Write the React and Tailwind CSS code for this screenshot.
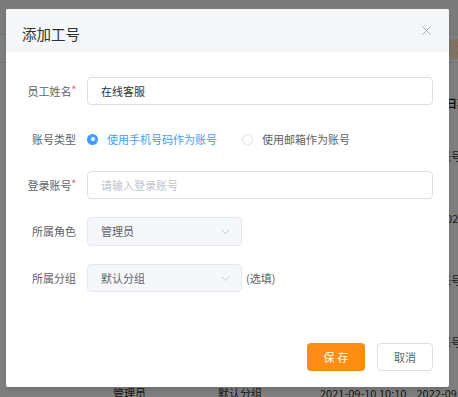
import React from 'react';

const font = { fontFamily: '"Noto Sans CJK SC", "Noto Sans", sans-serif' };

const rows = [
    { phone: '13800138003', acc: '账号', end: '' },
    { phone: '13800138006', acc: '', end: '2022-09' },
    { phone: '13800138003', acc: '账号', end: '' },
    { phone: '13800138004', acc: '账号', end: '' },
];

const FieldLabel = ({ children, required }) => (
    <div className="w-[70px] shrink-0 text-right text-[11px] text-[#606266] leading-none">
        {children}
        {required && <span className="text-[#f56c6c] text-[9px] font-bold align-top relative top-[-1px]">*</span>}
    </div>
);

const Chevron = () => (
    <svg width="9" height="5" viewBox="0 0 9 5" fill="none" className="shrink-0">
        <path d="M0.5 0.5L4.5 4.5L8.5 0.5" stroke="#c0c4cc" strokeWidth="0.9" />
    </svg>
);

const SelectBox = ({ value }) => (
    <div className="w-[155px] h-full flex items-center justify-between pl-[13px] pr-[11px] bg-[#f5f7fa] border border-[#e4e7ed] rounded-[4px] text-[11px] text-[#606266]">
        <span>{value}</span>
        <Chevron />
    </div>
);

const BackgroundPage = () => (
    <div className="w-[458px] h-[397px] bg-white overflow-hidden text-[11px]">
        <div className="h-[35px] bg-[#f7f7f7] border-b border-[#e6e6e6]" />
        <div className="h-[28px] flex items-center border-b border-[#e6e6e6]">
            <div className="ml-[449px] h-[20px] px-2 flex items-center bg-[#ffe7cc] text-[#ff8c1a] whitespace-nowrap rounded-sm">
                添加工号
            </div>
        </div>
        <div className="h-[62px] flex items-end pb-[14px]">
            <span className="ml-[446px] text-[#1f1f1f] font-semibold whitespace-nowrap">日期</span>
        </div>
        {rows.map((r, i) => (
            <div key={i} className="h-[62px] flex items-center text-[#2e2e2e]">
                <div className="w-[6px] overflow-hidden flex justify-end">
                    <div className="shrink-0 whitespace-nowrap leading-[17px] text-right">
                        <div>1</div>
                        <div>{r.phone}</div>
                    </div>
                </div>
                <div className="ml-[440px] whitespace-nowrap text-[#3a3a3a]">{r.acc || r.end}</div>
            </div>
        ))}
        <div className="flex text-[#2e2e2e] whitespace-nowrap mt-[12px]">
            <span className="ml-[113px]">管理员</span>
            <span className="ml-[72px]">默认分组</span>
            <span className="ml-[58px]">2021-09-10 10:10</span>
            <span className="ml-[10px]">2022-09</span>
        </div>
    </div>
);

const Modal = () => (
    <div className="absolute left-[6px] top-[9px] w-[443px] bg-white rounded-[2px] shadow-md">
        {/* Header */}
        <div className="h-[43px] bg-[#f5f6f7] flex items-center justify-between pl-4 pr-[16px] rounded-t-[2px]">
            <span className="text-[14.5px] text-[#303133] mt-[7px]">添加工号</span>
            <svg width="9" height="9" viewBox="0 0 9 9" className="mr-[2px]">
                <path d="M0.5 0.5L8.5 8.5M8.5 0.5L0.5 8.5" stroke="#a8abb2" strokeWidth="1" />
            </svg>
        </div>

        {/* Body */}
        <div className="pt-[25px] pr-4 flex flex-col">
            <div className="h-[28px] flex items-center gap-[11px]">
                <FieldLabel required>员工姓名</FieldLabel>
                <div className="flex-1 h-full flex items-center px-[13px] border border-[#dcdfe6] rounded-[4px] text-[11px] text-[#303133]">
                    在线客服
                </div>
            </div>

            <div className="h-[28px] mt-[20px] flex items-center gap-[11px]">
                <FieldLabel>账号类型</FieldLabel>
                <div className="flex items-center text-[11px]">
                    <span className="w-[11px] h-[11px] rounded-full bg-[#409eff] flex items-center justify-center">
                        <span className="w-[4px] h-[4px] rounded-full bg-white" />
                    </span>
                    <span className="ml-[9px] text-[#409eff]">使用手机号码作为账号</span>
                    <span className="ml-[25px] w-[11px] h-[11px] rounded-full border border-[#dcdfe6] bg-white" />
                    <span className="ml-[9px] text-[#606266]">使用邮箱作为账号</span>
                </div>
            </div>

            <div className="h-[28px] mt-[18px] flex items-center gap-[11px]">
                <FieldLabel required>登录账号</FieldLabel>
                <div className="flex-1 h-full flex items-center px-[13px] border border-[#dcdfe6] rounded-[4px] text-[11px] text-[#c0c4cc]">
                    请输入登录账号
                </div>
            </div>

            <div className="h-[29px] mt-[18px] flex items-center gap-[11px]">
                <FieldLabel>所属角色</FieldLabel>
                <SelectBox value="管理员" />
            </div>

            <div className="h-[28px] mt-[18px] flex items-center gap-[11px]">
                <FieldLabel>所属分组</FieldLabel>
                <div className="h-full flex items-center gap-[4px]">
                    <SelectBox value="默认分组" />
                    <span className="text-[11px] text-[#606266]">(选填)</span>
                </div>
            </div>
        </div>

        {/* Footer */}
        <div className="mt-[51px] pb-4 pr-4 flex justify-end gap-[12px]">
            <button className="w-[58px] h-[28px] rounded-[4px] bg-[#ff8c13] text-white text-[11px] tracking-[3px] pl-[3px]">
                保存
            </button>
            <button className="w-[56px] h-[28px] rounded-[4px] bg-white border border-[#dcdfe6] text-[#606266] text-[11px]">
                取消
            </button>
        </div>
    </div>
);

export default function App() {
    return (
        <div className="relative w-[458px] h-[397px] overflow-hidden" style={font}>
            <BackgroundPage />
            <div className="absolute inset-0 bg-black/50" />
            <Modal />
        </div>
    );
}
